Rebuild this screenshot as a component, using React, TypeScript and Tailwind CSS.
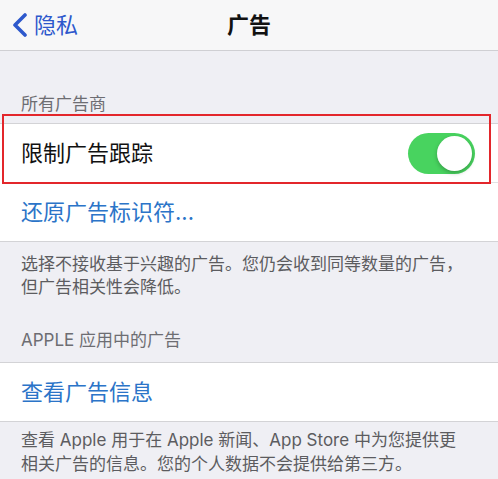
const font = {
  fontFamily: 'Inter, "Noto Sans CJK SC", sans-serif',
};

const Toggle = () => (
  <div className="flex h-[41px] w-[67px] items-center justify-end rounded-full bg-[#48d35f] p-[3px]">
    <div className="h-[35px] w-[35px] rounded-full bg-white shadow-[0_2px_4px_rgba(0,0,0,0.25)]" />
  </div>
);

const App = () => {
  return (
    <div
      className="relative h-[479px] w-[498px] overflow-hidden bg-[#efeff4]"
      style={font}
    >
      {/* nav bar */}
      <div className="relative flex h-[51px] items-center border-b border-[#cfcfd3] bg-[#f7f7f8]">
        <div className="flex items-center pl-[11px]">
          <svg width="18" height="24" viewBox="0 0 18 24" fill="none">
            <path
              d="M14 2 L4 12 L14 22"
              stroke="#2d58cc"
              strokeWidth="3.6"
              strokeLinecap="round"
              strokeLinejoin="round"
            />
          </svg>
          <span className="ml-[5px] text-[22px] leading-none text-[#2d58cc]">
            隐私
          </span>
        </div>
        <div className="absolute inset-x-0 top-0 flex h-[50px] items-center justify-center">
          <span className="text-[22px] font-semibold leading-none text-[#111]">
            广告
          </span>
        </div>
      </div>

      {/* section header */}
      <div className="flex h-[72px] items-end px-[21px] pb-[10px]">
        <span className="text-[17px] leading-none text-[#6d6d72]">
          所有广告商
        </span>
      </div>

      {/* group 1 */}
      <div className="border-y border-[#d3d3d6] bg-white">
        <div className="flex h-[58px] items-center justify-between pl-[21px] pr-[23px]">
          <span className="text-[22px] leading-none text-[#111]">
            限制广告跟踪
          </span>
          <Toggle />
        </div>
        <div className="ml-[21px] h-px bg-[#e2e2e4]" />
        <div className="flex h-[58px] items-center px-[21px]">
          <span className="text-[22px] leading-none text-[#2b74c8]">
            还原广告标识符...
          </span>
        </div>
      </div>

      <div className="px-[21px] pt-[11px] text-[17px] leading-[23px] text-[#5c5c60]">
        选择不接收基于兴趣的广告。您仍会收到同等数量的广告，
        <br />
        但广告相关性会降低。
      </div>

      <div className="flex h-[63px] items-end px-[21px] pb-[13px]">
        <span className="text-[17px] leading-none text-[#6d6d72]">
          APPLE 应用中的广告
        </span>
      </div>

      <div className="border-y border-[#d3d3d6] bg-white">
        <div className="flex h-[58px] items-center px-[21px]">
          <span className="text-[22px] leading-none text-[#2b74c8]">
            查看广告信息
          </span>
        </div>
      </div>

      <div className="px-[21px] pt-[6px] text-[17px] leading-[24px] text-[#5c5c60]">
        查看 Apple 用于在 Apple 新闻、App Store 中为您提供更
        <br />
        相关广告的信息。您的个人数据不会提供给第三方。
      </div>

      {/* red annotation box */}
      <div className="pointer-events-none absolute left-[2px] top-[114px] h-[70px] w-[489px] border-2 border-[#e3262b]" />
    </div>
  );
};

export default App;
